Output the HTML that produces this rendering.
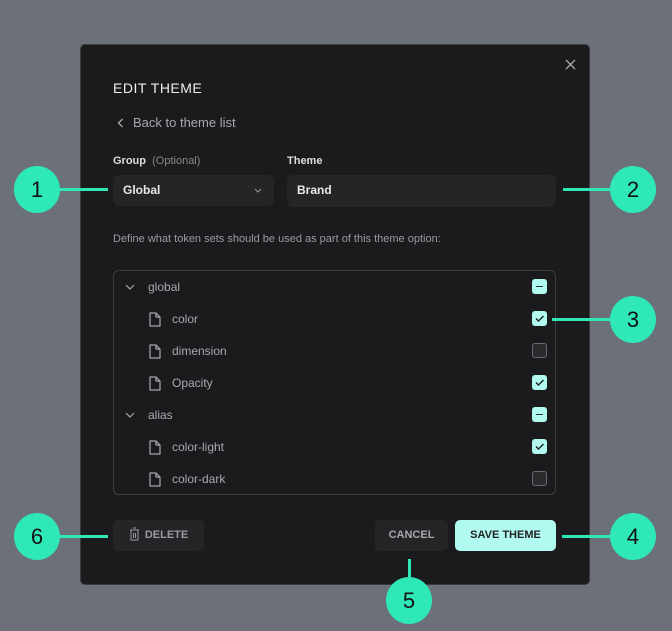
<!DOCTYPE html><html><head><style>
*{margin:0;padding:0;box-sizing:border-box}
body{width:672px;height:631px;background:#6b7079;position:relative;overflow:hidden;font-family:"Liberation Sans",sans-serif}
.modal{position:absolute;left:80px;top:44px;width:510px;height:541px;background:#1b1b1e;border:1px solid #3a3b3f;border-radius:5px}
.a{position:absolute}
.circ{position:absolute;width:46px;height:47px;border-radius:50%;background:#2ee8b8;color:#111;font-size:22px;text-align:center;line-height:47px}
.ln{position:absolute;background:#2ee8b8}
.inp{position:absolute;background:#252528;border-radius:6px;color:#e8e8e8;font-size:12px;font-weight:bold;line-height:31px;padding-left:10px;height:31px}
.row{position:absolute;left:114px;width:440px;height:32px;color:#a8a8ad;font-size:12px;line-height:32px}
.row svg{position:absolute;top:9px}
.cb{position:absolute;left:532px;width:15px;height:15px;border-radius:3px}
.on{background:#b0faf0}
.off{border:1.5px solid #6a6a70;background:#2a2a2d}
.btn{position:absolute;top:520px;height:31px;border-radius:5px;font-size:11px;font-weight:bold;line-height:31px;text-align:center}
</style></head><body>
<div class="modal"></div>
<svg class="a" style="left:565px;top:59px" width="11" height="11"><path d="M1 1l9 9M10 1l-9 9" stroke="#aaa" stroke-width="1.3"/></svg>
<div class="a" style="left:113px;top:80px;color:#eee;font-size:14px;letter-spacing:0.5px">EDIT THEME</div>
<svg class="a" style="left:117px;top:118px" width="7" height="10"><path d="M5.5 1L1.5 5l4 4" stroke="#a8a8ad" stroke-width="1.3" fill="none"/></svg>
<div class="a" style="left:133px;top:115px;color:#a8a8ad;font-size:13px">Back to theme list</div>
<div class="a" style="left:113px;top:155px;color:#ddd;font-size:11px;font-weight:bold">Group <span style="font-weight:normal;color:#888">&nbsp;(Optional)</span></div>
<div class="a" style="left:287px;top:155px;color:#ddd;font-size:11px;font-weight:bold">Theme</div>
<div class="inp" style="left:113px;top:175px;width:161px">Global<svg style="position:absolute;right:12px;top:13px" width="8" height="5"><path d="M1 1l3 3 3-3" stroke="#999" fill="none"/></svg></div>
<div class="inp" style="left:287px;top:175px;width:269px;height:32px">Brand</div>
<div class="a" style="left:113px;top:233px;color:#9a9aa0;font-size:11px">Define what token sets should be used as part of this theme option:</div>
<div class="a" style="left:113px;top:270px;width:443px;height:225px;border:1px solid #3d3d41;border-radius:6px"></div>
<div class="row" style="top:271px"><svg style="left:11px;top:13px" width="10" height="6"><path d="M1 1l4 4 4-4" stroke="#a8a8ad" stroke-width="1.2" fill="none"/></svg><span style="position:absolute;left:34px">global</span></div>
<div class="row" style="top:303px"><svg style="left:35px" width="12" height="15"><path d="M1 1h6l4 4v9H1z M7 1v4h4" stroke="#a8a8ad" stroke-width="1.2" fill="none" stroke-linejoin="round"/></svg><span style="position:absolute;left:58px">color</span></div>
<div class="row" style="top:335px"><svg style="left:35px" width="12" height="15"><path d="M1 1h6l4 4v9H1z M7 1v4h4" stroke="#a8a8ad" stroke-width="1.2" fill="none" stroke-linejoin="round"/></svg><span style="position:absolute;left:58px">dimension</span></div>
<div class="row" style="top:367px"><svg style="left:35px" width="12" height="15"><path d="M1 1h6l4 4v9H1z M7 1v4h4" stroke="#a8a8ad" stroke-width="1.2" fill="none" stroke-linejoin="round"/></svg><span style="position:absolute;left:58px">Opacity</span></div>
<div class="row" style="top:399px"><svg style="left:11px;top:13px" width="10" height="6"><path d="M1 1l4 4 4-4" stroke="#a8a8ad" stroke-width="1.2" fill="none"/></svg><span style="position:absolute;left:34px">alias</span></div>
<div class="row" style="top:431px"><svg style="left:35px" width="12" height="15"><path d="M1 1h6l4 4v9H1z M7 1v4h4" stroke="#a8a8ad" stroke-width="1.2" fill="none" stroke-linejoin="round"/></svg><span style="position:absolute;left:58px">color-light</span></div>
<div class="row" style="top:463px"><svg style="left:35px" width="12" height="15"><path d="M1 1h6l4 4v9H1z M7 1v4h4" stroke="#a8a8ad" stroke-width="1.2" fill="none" stroke-linejoin="round"/></svg><span style="position:absolute;left:58px">color-dark</span></div>
<div class="cb on" style="top:279px"><div style="position:absolute;left:4px;top:6.5px;width:7px;height:1.5px;background:#333"></div></div>
<div class="cb on" style="top:311px"><svg width="15" height="15"><path d="M4 7.5l2.5 2.5 5-5" stroke="#222" stroke-width="1.4" fill="none"/></svg></div>
<div class="cb off" style="top:343px"></div>
<div class="cb on" style="top:375px"><svg width="15" height="15"><path d="M4 7.5l2.5 2.5 5-5" stroke="#222" stroke-width="1.4" fill="none"/></svg></div>
<div class="cb on" style="top:407px"><div style="position:absolute;left:4px;top:6.5px;width:7px;height:1.5px;background:#333"></div></div>
<div class="cb on" style="top:439px"><svg width="15" height="15"><path d="M4 7.5l2.5 2.5 5-5" stroke="#222" stroke-width="1.4" fill="none"/></svg></div>
<div class="cb off" style="top:471px"></div>
<div class="btn" style="left:113px;width:91px;background:#252528;color:#9a9aa0">
<svg width="11" height="14" style="vertical-align:-3px;margin-right:2px" viewBox="0 0 11 14"><path d="M1 3h9M4 1h3M2 3v10h7V3M4.5 6v5M6.5 6v5" stroke="#9a9aa0" fill="none"/></svg> DELETE</div>
<div class="btn" style="left:375px;width:73px;background:#252528;color:#a8a8ad">CANCEL</div>
<div class="btn" style="left:455px;width:101px;background:#b0faf0;color:#222">SAVE THEME</div>
<div class="ln" style="left:58px;top:188px;width:50px;height:3px"></div>
<div class="ln" style="left:563px;top:188px;width:50px;height:3px"></div>
<div class="ln" style="left:552px;top:318px;width:60px;height:3px"></div>
<div class="ln" style="left:562px;top:535px;width:50px;height:3px"></div>
<div class="ln" style="left:58px;top:535px;width:50px;height:3px"></div>
<div class="ln" style="left:408px;top:559px;width:3px;height:22px"></div>
<div class="circ" style="left:14px;top:166px">1</div>
<div class="circ" style="left:610px;top:166px">2</div>
<div class="circ" style="left:610px;top:296px">3</div>
<div class="circ" style="left:610px;top:513px">4</div>
<div class="circ" style="left:386px;top:577px">5</div>
<div class="circ" style="left:14px;top:513px">6</div>
</body></html>
